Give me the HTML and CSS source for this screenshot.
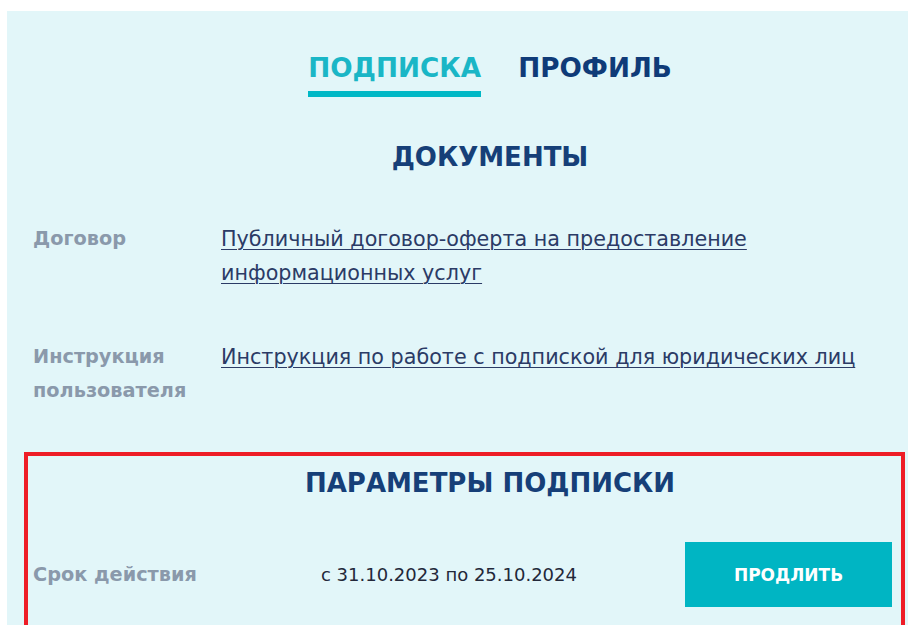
FILE: index.html
```html
<!DOCTYPE html>
<html lang="ru">
<head>
<meta charset="utf-8">
<title>Личный кабинет — Подписка</title>
<link rel="stylesheet" href="styles.css">
</head>
<body>
<main class="panel">
  <nav class="tabs">
    <a class="tab tab-active" href="#">ПОДПИСКА</a>
    <a class="tab" href="#">ПРОФИЛЬ</a>
  </nav>

  <section class="docs">
    <h2 class="section-title">ДОКУМЕНТЫ</h2>
    <div class="doc-row">
      <div class="label">Договор</div>
      <a class="doc-link" href="#">Публичный договор-оферта на предоставление информационных услуг</a>
    </div>
    <div class="doc-row">
      <div class="label">Инструкция пользователя</div>
      <a class="doc-link" href="#">Инструкция по работе с подпиской для юридических лиц</a>
    </div>
  </section>

  <section class="params">
    <h2 class="section-title">ПАРАМЕТРЫ ПОДПИСКИ</h2>
    <div class="param-row">
      <div class="label">Срок действия</div>
      <div class="period">с 31.10.2023 по 25.10.2024</div>
      <a class="btn" href="#">ПРОДЛИТЬ</a>
    </div>
  </section>

  <div class="highlight"></div>
</main>
</body>
</html>
```

FILE: styles.css
```css
html, body {
  margin: 0;
  padding: 0;
  background: #ffffff;
  overflow: hidden;
}

body {
  font-family: "DejaVu Sans", "Liberation Sans", sans-serif;
  color: #1f2a44;
}

.panel {
  position: relative;
  margin: 11px 0 0 7px;
  width: 966px;
  min-height: 640px;
  background: #e2f6f9;
  box-sizing: border-box;
  padding: 41px 26px 0 26px;
}

/* tab switcher */
.tabs {
  display: flex;
  justify-content: center;
  gap: 37px;
}

.tab {
  font-size: 26.3px;
  line-height: 32px;
  font-weight: 700;
  color: #0f3b78;
  text-decoration: none;
  padding-bottom: 7px;
  border-bottom: 6px solid transparent;
}

.tab-active {
  color: #1ab6c6;
  border-bottom-color: #00b8c6;
}

.section-title {
  margin: 0;
  text-align: center;
  font-size: 26px;
  line-height: 30px;
  font-weight: 700;
  color: #163f78;
}

/* documents */
.docs {
  margin-top: 45px;
}

.docs .section-title {
  margin-bottom: 50px;
}

.doc-row {
  display: grid;
  grid-template-columns: 188px 1fr;
  margin-bottom: 50px;
}

.label {
  font-size: 19.3px;
  line-height: 34px;
  font-weight: 700;
  color: #8a99ab;
}

.doc-row .label {
  width: 160px;
}

.doc-link {
  font-size: 20.7px;
  line-height: 34px;
  color: #2b3b66;
  text-decoration: underline;
  text-decoration-thickness: 1px;
  text-underline-offset: 3px;
  max-width: 640px;
}

/* subscription parameters */
.params {
  margin-top: 60px;
}

.param-row {
  display: grid;
  grid-template-columns: 288px 364px 207px;
  align-items: center;
  margin-top: 44px;
}

.period {
  font-size: 18px;
  color: #23283a;
}

.btn {
  display: flex;
  align-items: center;
  justify-content: center;
  height: 65px;
  background: #00b5c3;
  color: #ffffff;
  font-size: 17px;
  font-weight: 700;
  text-decoration: none;
}

/* red frame around the parameters block */
.highlight {
  position: absolute;
  left: 17px;
  top: 441px;
  width: 881px;
  height: 300px;
  box-sizing: border-box;
  border: 4px solid #ee1d27;
  pointer-events: none;
}
```
